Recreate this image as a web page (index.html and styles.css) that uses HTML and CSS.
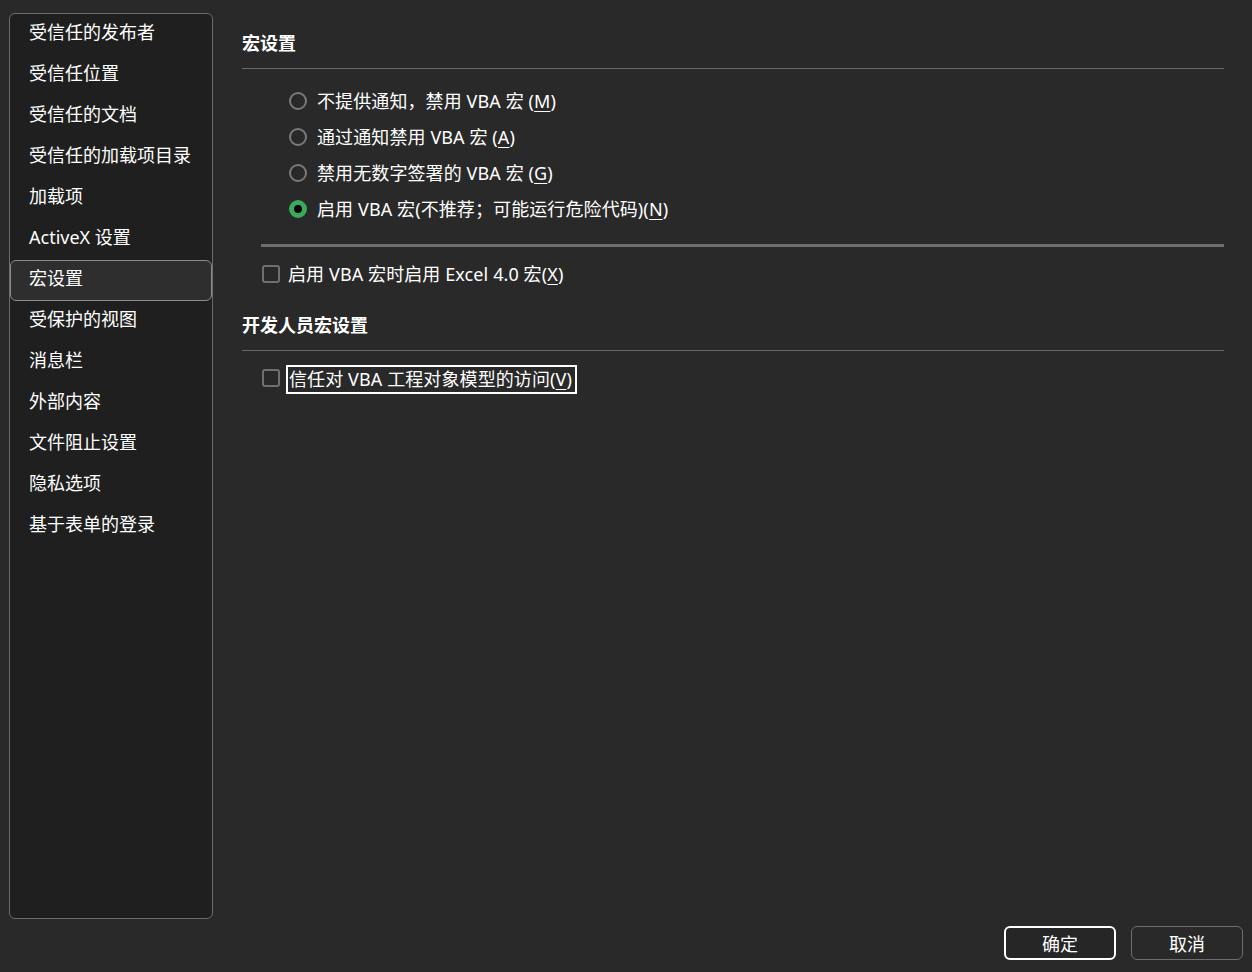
FILE: index.html
```html
<!DOCTYPE html>
<html lang="zh-CN">
<head>
<meta charset="utf-8">
<title>信任中心</title>
<link rel="stylesheet" href="styles.css">
</head>
<body>
<div class="app">
  <nav class="sidebar">
    <div class="nav-item">受信任的发布者</div>
    <div class="nav-item">受信任位置</div>
    <div class="nav-item">受信任的文档</div>
    <div class="nav-item">受信任的加载项目录</div>
    <div class="nav-item">加载项</div>
    <div class="nav-item">ActiveX 设置</div>
    <div class="nav-item selected">宏设置</div>
    <div class="nav-item">受保护的视图</div>
    <div class="nav-item">消息栏</div>
    <div class="nav-item">外部内容</div>
    <div class="nav-item">文件阻止设置</div>
    <div class="nav-item">隐私选项</div>
    <div class="nav-item">基于表单的登录</div>
  </nav>
  <main class="main">
    <div class="content">
      <div class="section-title first">宏设置</div>
      <div class="radio-list">
        <div class="radio-row"><span class="radio"></span><span class="label">不提供通知，禁用 VBA 宏 (<u>M</u>)</span></div>
        <div class="radio-row"><span class="radio"></span><span class="label">通过通知禁用 VBA 宏 (<u>A</u>)</span></div>
        <div class="radio-row"><span class="radio"></span><span class="label">禁用无数字签署的 VBA 宏 (<u>G</u>)</span></div>
        <div class="radio-row"><span class="radio checked"></span><span class="label">启用 VBA 宏(不推荐；可能运行危险代码)(<u>N</u>)</span></div>
      </div>
      <div class="separator"></div>
      <div class="check-row first-check"><span class="checkbox"></span><span class="label">启用 VBA 宏时启用 Excel 4.0 宏(<u>X</u>)</span></div>
      <div class="section-title second">开发人员宏设置</div>
      <div class="check-row second-check"><span class="checkbox"></span><span class="label focus">信任对 VBA 工程对象模型的访问(<u>V</u>)</span></div>
    </div>
    <div class="footer">
      <button class="btn primary">确定</button>
      <button class="btn">取消</button>
    </div>
  </main>
</div>
</body>
</html>
```
FILE: styles.css
```css
html, body {
  margin: 0;
  padding: 0;
  background: #292929;
}
body {
  font-family: "Noto Sans", "Noto Sans CJK SC", sans-serif;
  font-size: 18px;
  color: #ffffff;
}
.app {
  display: flex;
  height: 972px;
}
.sidebar {
  width: 202px;
  height: 904px;
  margin: 13px 0 0 9px;
  background: #1f1f1f;
  border: 1px solid #6b6b6b;
  border-radius: 6px;
  flex-shrink: 0;
}
.nav-item {
  height: 41px;
  line-height: 37px;
  padding-left: 19px;
  box-sizing: border-box;
  padding-bottom: 4px;
  white-space: nowrap;
}
.nav-item.selected {
  background: #2e2e2e;
  border: 1px solid #8c8c8c;
  border-radius: 6px;
  padding-left: 18px;
  line-height: 35px;
  padding-bottom: 4px;
  height: 41px;
}
.main {
  flex: 1;
  display: flex;
  flex-direction: column;
  padding: 0 9px 12px 29px;
}
.content {
  flex: 1;
  padding-right: 19px;
}
.section-title {
  font-weight: 700;
  font-size: 18px;
  line-height: 24px;
  padding-bottom: 13px;
  border-bottom: 1px solid #676767;
}
.section-title.first { margin-top: 31px; }
.section-title.second { margin-top: 21px; }
.radio-list {
  margin-top: 14px;
}
.radio-row {
  height: 36px;
  display: flex;
  align-items: center;
  padding-left: 47px;
  gap: 10px;
}
.label {
  line-height: 24px;
  letter-spacing: 0.1px;
}
.radio {
  width: 18px;
  height: 18px;
  box-sizing: border-box;
  border: 2px solid #7a7a7a;
  border-radius: 50%;
  flex-shrink: 0;
}
.radio.checked {
  border: 5px solid #3aaa5c;
  background: #000;
}
.separator {
  margin: 17px 0 0 19px;
  height: 3px;
  background: #6e6e6e;
}
.check-row {
  height: 36px;
  display: flex;
  align-items: center;
  padding-left: 20px;
  gap: 8px;
}
.check-row.first-check { margin-top: 9px; }
.check-row.second-check { margin-top: 9px; gap: 6px; }
.checkbox {
  width: 18px;
  height: 18px;
  box-sizing: border-box;
  border: 2px solid #6f6f6f;
  border-radius: 3px;
  flex-shrink: 0;
}
.label.focus {
  border: 2px solid #ffffff;
  padding: 0 3px 0 1px;
  line-height: 25px;
  position: relative;
  top: 1px;
}
u {
  text-underline-offset: 3px;
}
.footer {
  display: flex;
  justify-content: flex-end;
  gap: 15px;
}
.btn {
  width: 112px;
  height: 34px;
  font-family: inherit;
  font-size: 18px;
  color: #ffffff;
  background: #292929;
  border: 1px solid #6f6f6f;
  border-radius: 6px;
  padding: 0;
}
.btn.primary {
  border: 2px solid #ffffff;
  background: #262626;
}
```
